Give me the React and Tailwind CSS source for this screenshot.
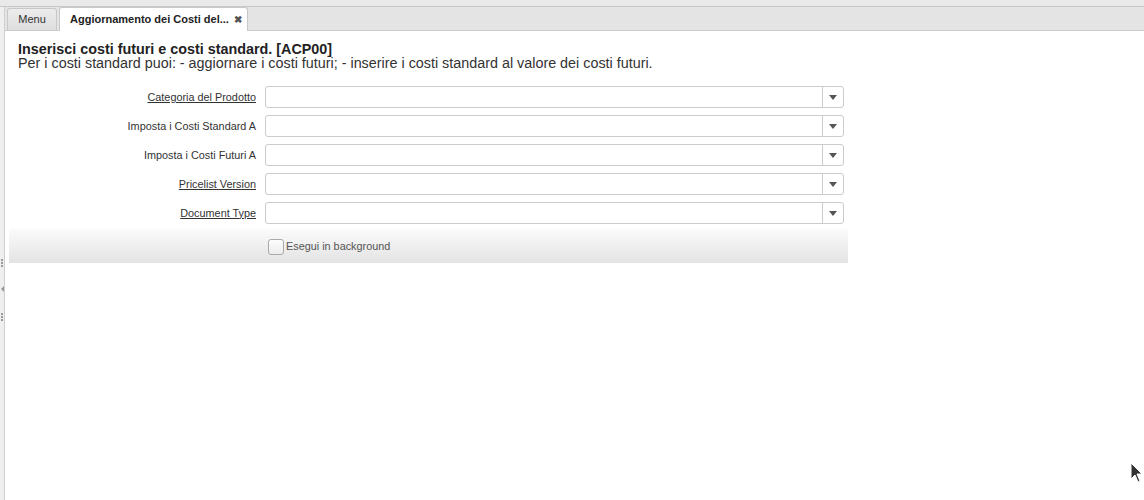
import React from "react";

const fields = [
  { label: "Categoria del Prodotto", link: true },
  { label: "Imposta i Costi Standard A", link: false },
  { label: "Imposta i Costi Futuri A", link: false },
  { label: "Pricelist Version", link: true },
  { label: "Document Type", link: true },
];

const Grip = () => (
  <div className="flex flex-col gap-[1px] items-center">
    <span className="w-[2px] h-[2px] bg-[#9a9a9a]"></span>
    <span className="w-[2px] h-[2px] bg-[#9a9a9a]"></span>
    <span className="w-[2px] h-[2px] bg-[#9a9a9a]"></span>
  </div>
);

const App = () => {
  return (
    <div
      className="relative w-[1144px] h-[500px] bg-white overflow-hidden text-[#333]"
      style={{ fontFamily: '"Liberation Sans", Arial, sans-serif' }}
    >
      {/* top strip */}
      <div className="h-[7px] bg-[#e9e9e9] border-b border-[#c8c8c8]"></div>

      <div className="flex h-[493px]">
        {/* left splitter */}
        <div className="w-[5px] bg-[#efefef] border-r border-[#cfcfcf] flex flex-col items-center pt-[252px]">
          <Grip />
          <div className="mt-[19px] w-0 h-0 border-y-[3px] border-y-transparent border-r-[3px] border-r-[#999]"></div>
          <div className="mt-[21px]">
            <Grip />
          </div>
        </div>

        <div className="flex-1 flex flex-col">
          {/* tab bar */}
          <div className="h-[24px] bg-[#e4e4e4] border-b border-[#cbcbcb] flex items-end pl-[2px] gap-[2px]">
            <div className="h-[22px] w-[50px] border border-b-0 border-[#c8c8c8] rounded-t-[3px] flex items-center justify-center text-[11px] text-[#333] bg-gradient-to-b from-[#ececec] to-[#dedede]">
              Menu
            </div>
            <div className="h-[24px] w-[189px] bg-white border border-b-0 border-[#c8c8c8] rounded-t-[3px] flex items-center pl-[10px] text-[11px] font-bold text-[#222] -mb-[1px]">
              <span>Aggiornamento dei Costi del...</span>
              <span className="ml-[5px] text-[#555] text-[10px] leading-none">✖</span>
            </div>
          </div>

          {/* content */}
          <div className="flex-1 pl-[4px] pt-[11px]">
            <div className="pl-[9px] leading-[14px]">
              <div className="text-[14.35px] font-bold text-[#222]">
                Inserisci costi futuri e costi standard. [ACP00]
              </div>
              <div className="text-[14.35px] text-[#333]">
                Per i costi standard puoi: - aggiornare i costi futuri; - inserire i costi standard al valore dei costi futuri.
              </div>
            </div>

            <div className="mt-[16px] w-[839px] flex flex-col gap-[7px]">
              {fields.map((f) => (
                <div key={f.label} className="flex items-center h-[22px]">
                  <div className="w-[256px] text-right text-[10.85px] text-[#333] pr-[9px]">
                    <span className={f.link ? "underline" : ""}>{f.label}</span>
                  </div>
                  <div className="flex-1 h-[22px] flex border border-[#cccccc] rounded-[3px] bg-white">
                    <div className="flex-1"></div>
                    <div className="w-[21px] border-l border-[#cccccc] flex items-center justify-center">
                      <div className="w-0 h-0 border-x-[4px] border-x-transparent border-t-[5px] border-t-[#555]"></div>
                    </div>
                  </div>
                  <div className="w-[4px]"></div>
                </div>
              ))}
            </div>

            <div className="mt-[5px] w-[839px] h-[34px] bg-gradient-to-b from-[#fbfbfb] to-[#e3e3e3] flex items-center pl-[259px] pt-[1px]">
              <div className="w-[16px] h-[16px] border border-[#aaa] rounded-[3px] bg-gradient-to-b from-[#fdfdfd] to-[#ececec]"></div>
              <span className="ml-[2px] text-[10.85px] text-[#555]">Esegui in background</span>
            </div>
          </div>
        </div>
      </div>

      {/* mouse cursor */}
      <svg className="absolute left-[1130px] top-[462px]" width="14" height="22" viewBox="0 0 14 22">
        <path d="M1 1 L1 17 L5 13 L8 20 L10 19 L7 12 L12 12 Z" fill="#333" stroke="#fff" strokeWidth="1" />
      </svg>
    </div>
  );
};

export default App;
